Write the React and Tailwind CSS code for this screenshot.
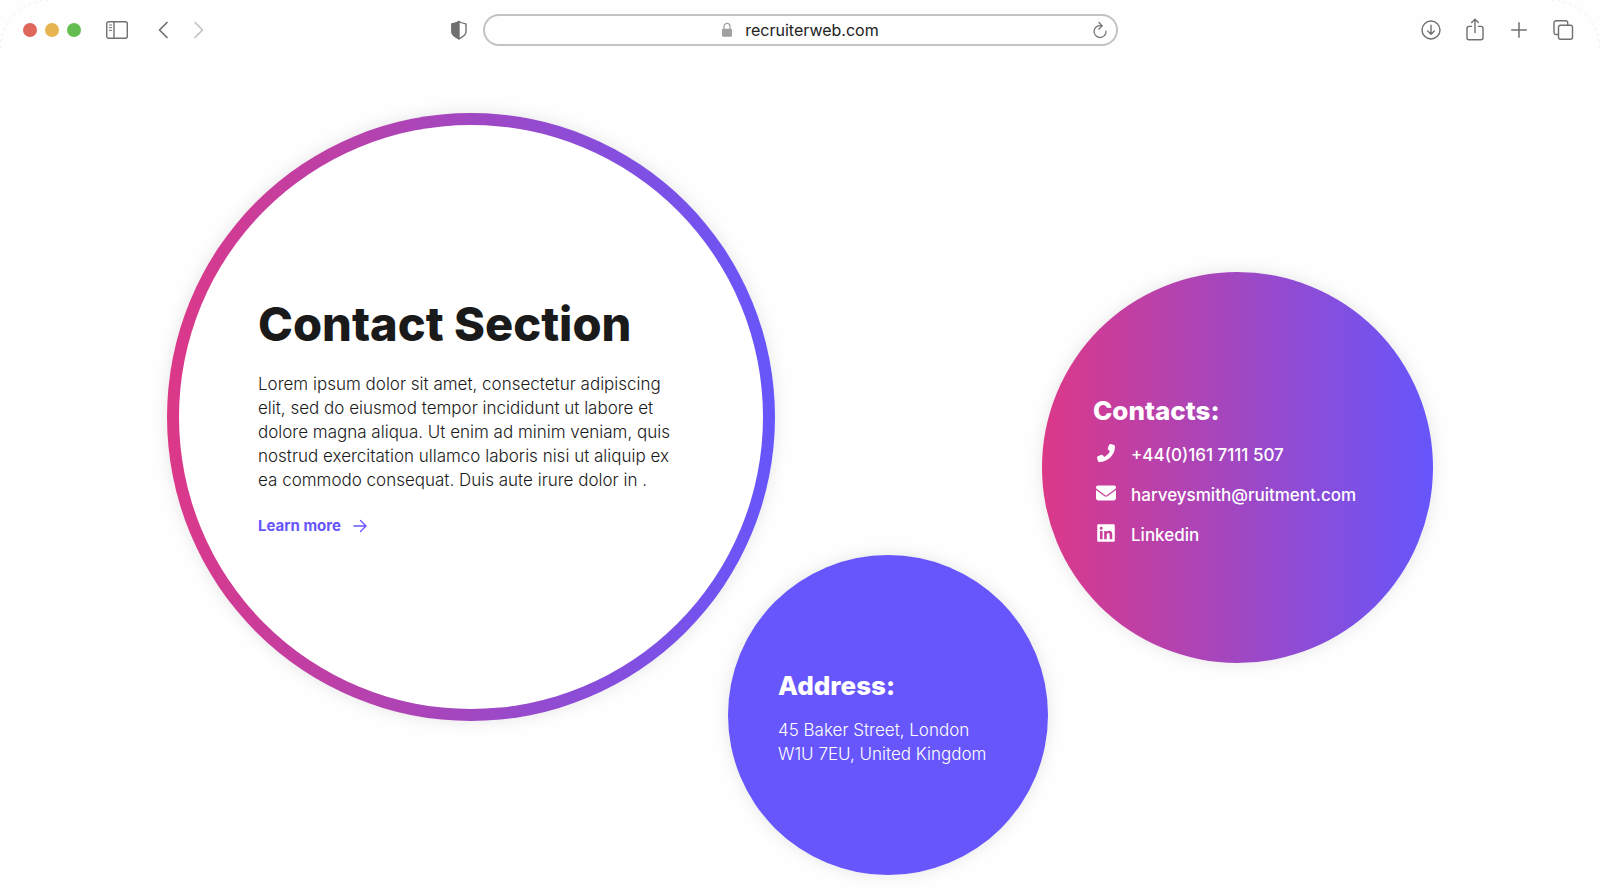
import { FaEnvelope, FaLinkedin, FaPhone } from "react-icons/fa6";

const iconProps = {
  fill: "none",
  stroke: "currentColor",
  strokeLinecap: "round",
  strokeLinejoin: "round",
  "aria-hidden": true,
};

const SidebarIcon = () => (
  <svg {...iconProps} width="24" height="20" viewBox="0 0 24 20" strokeWidth="1.4">
    <rect x="1.7" y="1.7" width="20.6" height="16.6" rx="2" />
    <path d="M9 1.7v16.6" />
    <path d="M4.3 5h2.4M4.3 7.7h2.4M4.3 10.4h2.4" strokeWidth="1" />
  </svg>
);

const ChevronIcon = ({ flip }) => (
  <svg {...iconProps} width="12" height="20" viewBox="0 0 12 20" strokeWidth="1.7">
    <path d={flip ? "M2 2.5l7.5 7.5L2 17.5" : "M10 2.5L2.5 10l7.5 7.5"} />
  </svg>
);

const ShieldIcon = () => (
  <svg {...iconProps} width="18" height="20" viewBox="0 0 18 20" strokeWidth="1.4">
    <path d="M9 1.5C7 2.7 4.5 3.5 2 3.9v8.2c0 3 4 5.2 7 6.7 3-1.5 7-3.7 7-6.7V3.9C13.5 3.5 11 2.7 9 1.5z" />
    <path d="M9 1.5C7 2.7 4.5 3.5 2 3.9v8.2c0 3 4 5.2 7 6.7z" fill="currentColor" />
  </svg>
);

const LockIcon = () => (
  <svg {...iconProps} width="12" height="16" viewBox="0 0 12 16">
    <path d="M3 7.5V4.7a3 3.3 0 0 1 6 0v2.8" strokeWidth="1.3" />
    <rect x="1" y="6.8" width="10" height="7.9" rx="1.2" fill="currentColor" stroke="none" />
  </svg>
);

const ReloadIcon = () => (
  <svg {...iconProps} width="16" height="18" viewBox="0 0 16 18" strokeWidth="1.2">
    <path d="M9.4 4.7A6 6 0 1 0 14 10" />
    <path d="M7 1.5l3.3 3.3L7 8" />
  </svg>
);

const DownloadIcon = () => (
  <svg {...iconProps} width="20" height="20" viewBox="0 0 20 20" strokeWidth="1.4">
    <circle cx="10" cy="10" r="9" />
    <path d="M10 5.3v8.7M6.7 10.9L10 14.2l3.3-3.3" />
  </svg>
);

const ShareIcon = () => (
  <svg {...iconProps} width="20" height="24" viewBox="0 0 20 24" strokeWidth="1.4">
    <path d="M6.5 8.4H4a2 2 0 0 0-2 2v9.4a2 2 0 0 0 2 2h12a2 2 0 0 0 2-2v-9.4a2 2 0 0 0-2-2h-2.5" />
    <path d="M10 14.5V1.5M6.7 4.6L10 1.3l3.3 3.3" />
  </svg>
);

const PlusIcon = () => (
  <svg {...iconProps} width="20" height="20" viewBox="0 0 20 20" strokeWidth="1.5">
    <path d="M10 2.7v14.6M2.7 10h14.6" />
  </svg>
);

const TabsIcon = () => (
  <svg {...iconProps} width="22" height="22" viewBox="0 0 22 22" strokeWidth="1.4">
    <path d="M5 15.5H3a2 2 0 0 1-2-2V3.8a2 2 0 0 1 2-2h9.7a2 2 0 0 1 2 2V6" />
    <rect x="5.5" y="6.3" width="14" height="14" rx="2" />
  </svg>
);

const ArrowIcon = () => (
  <svg {...iconProps} width="14" height="14" viewBox="0 0 14 14" strokeWidth="1.4">
    <path d="M1 7h12M7.5 1.5L13 7l-5.5 5.5" />
  </svg>
);

// Faint outline of the rounded window corner
const WindowCorner = ({ className }) => (
  <svg
    className={`pointer-events-none absolute top-0 size-12 text-[#f0f0f0] ${className}`}
    viewBox="0 0 48 48"
    fill="none"
    stroke="currentColor"
    strokeDasharray="3 3"
    aria-hidden
  >
    <path d="M.5 48A47.5 47.5 0 0 1 48 .5" />
  </svg>
);

const contacts = [
  {
    label: "+44(0)161 7111 507",
    href: "tel:+441617111507",
    Icon: FaPhone,
    iconClass: "size-[18px] -scale-x-100",
  },
  {
    label: "harveysmith@ruitment.com",
    href: "mailto:harveysmith@ruitment.com",
    Icon: FaEnvelope,
    iconClass: "size-5",
  },
  { label: "Linkedin", href: "#linkedin", Icon: FaLinkedin, iconClass: "size-5" },
];

const BrowserBar = () => (
  <header className="relative grid h-[60px] grid-cols-[1fr_minmax(0,635px)_1fr] items-center text-[#707070]">
    <WindowCorner className="left-0" />
    <WindowCorner className="right-0 -scale-x-100" />

    <div className="flex items-center pr-[15px] pl-[23px]">
      <div className="flex gap-2">
        <button type="button" aria-label="Close" className="size-[14px] rounded-full bg-[#e0655a]" />
        <button type="button" aria-label="Minimise" className="size-[14px] rounded-full bg-[#e6b450]" />
        <button type="button" aria-label="Full screen" className="size-[14px] rounded-full bg-[#63bd50]" />
      </div>
      <button type="button" aria-label="Show sidebar" className="ml-6">
        <SidebarIcon />
      </button>
      <div className="ml-7 flex gap-6">
        <button type="button" aria-label="Back">
          <ChevronIcon />
        </button>
        <button type="button" aria-label="Forward" className="text-[#c2c2c2]">
          <ChevronIcon flip />
        </button>
      </div>
      <button type="button" aria-label="Privacy report" className="ml-auto">
        <ShieldIcon />
      </button>
    </div>

    <div className="flex h-8 items-center rounded-full border-2 border-[#c2c2c2] pr-2 pl-6">
      <div className="flex flex-1 items-center justify-center gap-3">
        <span className="text-[#a0a0a0]">
          <LockIcon />
        </span>
        <input
          type="text"
          aria-label="Address"
          defaultValue="recruiterweb.com"
          className="field-sizing-content text-base leading-6 text-[#222222] outline-none"
        />
      </div>
      <button type="button" aria-label="Reload">
        <ReloadIcon />
      </button>
    </div>

    <div className="flex items-center justify-end gap-6 pr-[25px]">
      <button type="button" aria-label="Downloads">
        <DownloadIcon />
      </button>
      <button type="button" aria-label="Share">
        <ShareIcon />
      </button>
      <button type="button" aria-label="New tab">
        <PlusIcon />
      </button>
      <button type="button" aria-label="Show tabs">
        <TabsIcon />
      </button>
    </div>
  </header>
);

const App = () => {
  return (
    <div className="min-h-screen bg-[#fefefe] font-['Inter',sans-serif] text-[#1a1a1a]">
      <BrowserBar />

      <main className="flex items-start justify-center pt-[53px] pb-5">
        {/* Intro */}
        <section className="size-[608px] shrink-0 rounded-full bg-linear-to-r/srgb from-[#dc3888] to-[#6656fc] p-3 shadow-[0_0_16px_rgba(0,0,0,0.1)]">
          <div className="flex size-full flex-col justify-center rounded-full bg-white px-[79px] pt-[2px]">
            <h1 className="text-[47px] leading-12 font-extrabold">Contact Section</h1>
            <p className="mt-6 text-[17px] leading-6 font-light">
              Lorem ipsum dolor sit amet, consectetur adipiscing elit, sed do eiusmod tempor incididunt ut
              labore et dolore magna aliqua. Ut enim ad minim veniam, quis nostrud exercitation ullamco
              laboris nisi ut aliquip ex ea commodo consequat. Duis aute irure dolor in .
            </p>
            <a
              href="#learn-more"
              className="mt-6 flex items-center gap-3 text-[15px] leading-5 font-bold text-[#6656fc]"
            >
              Learn more
              <ArrowIcon />
            </a>
          </div>
        </section>

        {/* Address */}
        <section className="mt-[442px] -ml-[47px] flex size-80 shrink-0 flex-col justify-center rounded-full bg-[#6656fc] pt-[6px] pl-[50px] text-white shadow-[0_0_16px_rgba(0,0,0,0.1)]">
          <h2 className="text-[26px] leading-8 font-extrabold">Address:</h2>
          <address className="mt-4 text-[17px] leading-6 font-light not-italic">
            45 Baker Street, London
            <br />
            W1U 7EU, United Kingdom
          </address>
        </section>

        {/* Contacts */}
        <section className="mt-[159px] -ml-[6px] flex size-[391px] shrink-0 flex-col justify-center rounded-full bg-linear-to-r/srgb from-[#dc3888] to-[#6656fc] pt-[6px] pl-[51px] text-white shadow-[0_0_16px_rgba(0,0,0,0.1)]">
          <h2 className="text-[26px] leading-8 font-extrabold">Contacts:</h2>
          <ul className="mt-4 space-y-4">
            {contacts.map(({ label, href, Icon, iconClass }) => (
              <li key={label}>
                <a href={href} className="flex gap-3 text-[17px] leading-6 font-medium">
                  <span className="flex h-5 w-[26px] items-center justify-center">
                    <Icon className={iconClass} />
                  </span>
                  {label}
                </a>
              </li>
            ))}
          </ul>
        </section>
      </main>
    </div>
  );
};

export default App;
